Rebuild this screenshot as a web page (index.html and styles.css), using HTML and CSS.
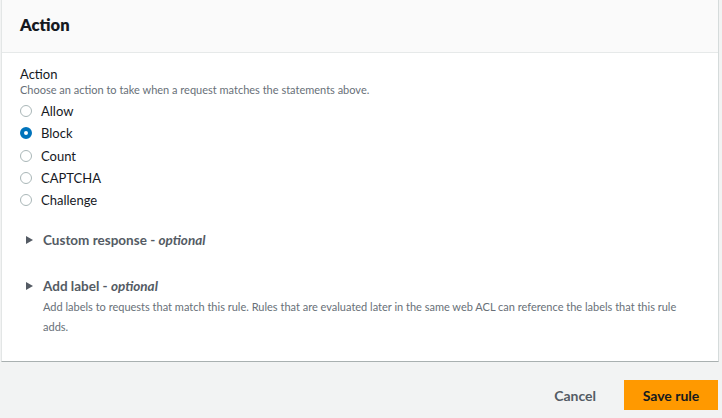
FILE: index.html
```html
<!DOCTYPE html>
<html lang="en">
<head>
<meta charset="utf-8">
<title>Action</title>
<link rel="stylesheet" href="styles.css">
</head>
<body>
<div class="panel">
  <div class="panel-header"><h2 class="panel-title">Action</h2></div>
  <div class="panel-body">
    <div class="field-label">Action</div>
    <div class="field-desc">Choose an action to take when a request matches the statements above.</div>
    <div class="radio-group">
      <label class="radio-row"><span class="radio"></span><span class="radio-text">Allow</span></label>
      <label class="radio-row"><span class="radio checked"></span><span class="radio-text">Block</span></label>
      <label class="radio-row"><span class="radio"></span><span class="radio-text">Count</span></label>
      <label class="radio-row"><span class="radio"></span><span class="radio-text">CAPTCHA</span></label>
      <label class="radio-row"><span class="radio"></span><span class="radio-text">Challenge</span></label>
    </div>
    <div class="expander first"><span class="caret"></span><span class="exp-title">Custom response - <em>optional</em></span></div>
    <div class="expander second"><span class="caret"></span><span class="exp-title">Add label - <em>optional</em></span></div>
    <div class="exp-desc">Add labels to requests that match this rule. Rules that are evaluated later in the same web ACL can reference the labels that this rule adds.</div>
  </div>
</div>
<div class="footer">
  <span class="cancel">Cancel</span>
  <span class="save">Save rule</span>
</div>
</body>
</html>
```
FILE: styles.css
```css
html, body {
  margin: 0;
  padding: 0;
}
body {
  background: #f2f3f3;
  font-family: Lato, "Noto Sans", sans-serif;
  color: #16191f;
  width: 722px;
  height: 418px;
  overflow: hidden;
}
.panel {
  margin: 0 3px 0 1px;
  background: #ffffff;
  border-left: 1px solid #e3e6e6;
  border-right: 1px solid #d5dbdb;
  border-bottom: 1px solid #a9b0b0;
}
.panel-header {
  height: 52px;
  background: #fafafa;
  border-bottom: 1px solid #e6e9e9;
  display: flex;
  align-items: center;
  padding-left: 18px;
}
.panel-title {
  margin: 0;
  font-size: 16.5px;
  font-weight: 800;
  color: #16191f;
  line-height: 22px;
  position: relative;
  top: -1px;
}
.panel-body {
  padding: 13px 20px 24px 18px;
}
.field-label {
  font-size: 13px;
  line-height: 16px;
}
.field-desc {
  font-size: 11px;
  line-height: 16px;
  color: #687078;
}
.radio-group {
  margin-top: 2px;
  display: flex;
  flex-direction: column;
}
.radio-row {
  height: 22.25px;
  display: flex;
  align-items: center;
  font-size: 13px;
}
.radio {
  width: 10px;
  height: 10px;
  border: 1px solid #aab7b8;
  border-radius: 50%;
  box-sizing: content-box;
  margin-right: 9px;
  flex: none;
}
.radio.checked {
  width: 4px;
  height: 4px;
  border: 4px solid #0073bb;
  background: #ffffff;
}
.expander {
  height: 20px;
  display: flex;
  align-items: center;
  font-size: 13.5px;
  font-weight: 700;
  color: #545b64;
}
.expander.first {
  margin-top: 19px;
}
.expander.second {
  margin-top: 26px;
}
.expander em {
  font-style: italic;
}
.caret {
  width: 0;
  height: 0;
  border-top: 4px solid transparent;
  border-bottom: 4px solid transparent;
  border-left: 7px solid #545b64;
  margin-left: 6px;
  margin-right: 10px;
}
.exp-desc {
  padding-left: 23px;
  font-size: 11px;
  line-height: 20px;
  color: #687078;
  margin-top: 1px;
}
.footer {
  display: flex;
  justify-content: flex-end;
  align-items: center;
  gap: 28px;
  padding: 18px 4px 0 0;
}
.cancel {
  font-size: 14px;
  font-weight: 700;
  color: #545b64;
}
.save {
  background: #ff9900;
  color: #16191f;
  font-size: 14px;
  font-weight: 700;
  height: 30px;
  width: 94px;
  display: flex;
  align-items: center;
  justify-content: center;
}
```
